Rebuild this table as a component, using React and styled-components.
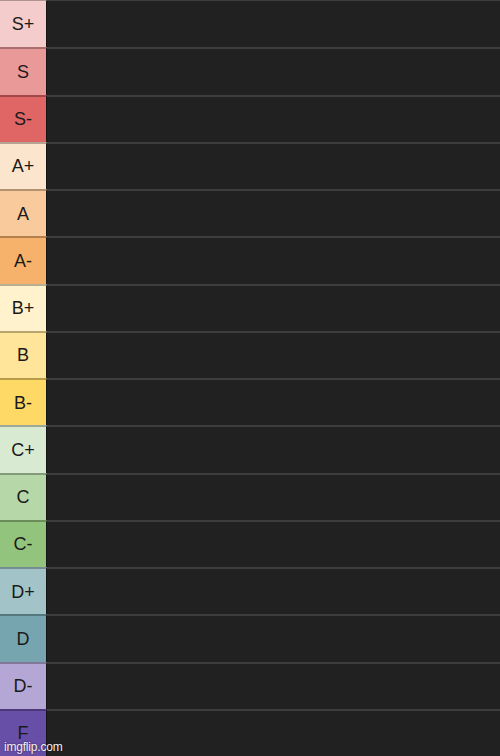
import styled, { createGlobalStyle } from 'styled-components';

const GlobalStyle = createGlobalStyle`
  html, body {
    margin: 0;
    padding: 0;
    background: #1f1f1f;
  }
  body {
    font-family: "Liberation Sans", Arial, sans-serif;
    overflow: hidden;
  }
`;

const Board = styled.div`
  position: relative;
  width: 500px;
  height: 756px;
  overflow: hidden;
  display: flex;
  flex-direction: column;
  background: #1f1f1f;
`;

const Row = styled.div`
  display: flex;
  flex: 0 0 47.25px;
  height: 47.25px;
`;

const Label = styled.div`
  width: 47px;
  flex: 0 0 47px;
  box-sizing: border-box;
  display: flex;
  align-items: center;
  justify-content: center;
  padding-top: 1px;
  background: ${(p) => p.$color};
  border-top: ${(p) => (p.$first ? '1px' : '2px')} solid rgba(0, 0, 0, 0.28);
  border-right: 1px solid #141414;
  color: #1a1a1a;
  font-size: 18px;
`;

const Items = styled.div`
  flex: 1;
  box-sizing: border-box;
  background: #212121;
  border-top: ${(p) => (p.$first ? '1px' : '2px')} solid #3d3d3d;
`;

const Watermark = styled.span`
  position: absolute;
  left: 4px;
  bottom: 2px;
  color: #f2f2f2;
  font-size: 12px;
  letter-spacing: -0.2px;
  text-shadow: 0 0 2px rgba(0, 0, 0, 0.6);
`;

const tiers = [
  { name: 'S+', color: '#f4cccc' },
  { name: 'S', color: '#ea9999' },
  { name: 'S-', color: '#e06666' },
  { name: 'A+', color: '#fce5cd' },
  { name: 'A', color: '#f9cb9c' },
  { name: 'A-', color: '#f6b26b' },
  { name: 'B+', color: '#fff2cc' },
  { name: 'B', color: '#ffe599' },
  { name: 'B-', color: '#ffd966' },
  { name: 'C+', color: '#d9ead3' },
  { name: 'C', color: '#b6d7a8' },
  { name: 'C-', color: '#93c47d' },
  { name: 'D+', color: '#a2c4c9' },
  { name: 'D', color: '#76a5af' },
  { name: 'D-', color: '#b4a7d6' },
  { name: 'F', color: '#674ea7' },
];

export default function App() {
  return (
    <>
      <GlobalStyle />
      <Board>
        {tiers.map((t, i) => (
          <Row key={t.name}>
            <Label $color={t.color} $first={i === 0}>
              {t.name}
            </Label>
            <Items $first={i === 0} />
          </Row>
        ))}
        <Watermark>imgflip.com</Watermark>
      </Board>
    </>
  );
}
